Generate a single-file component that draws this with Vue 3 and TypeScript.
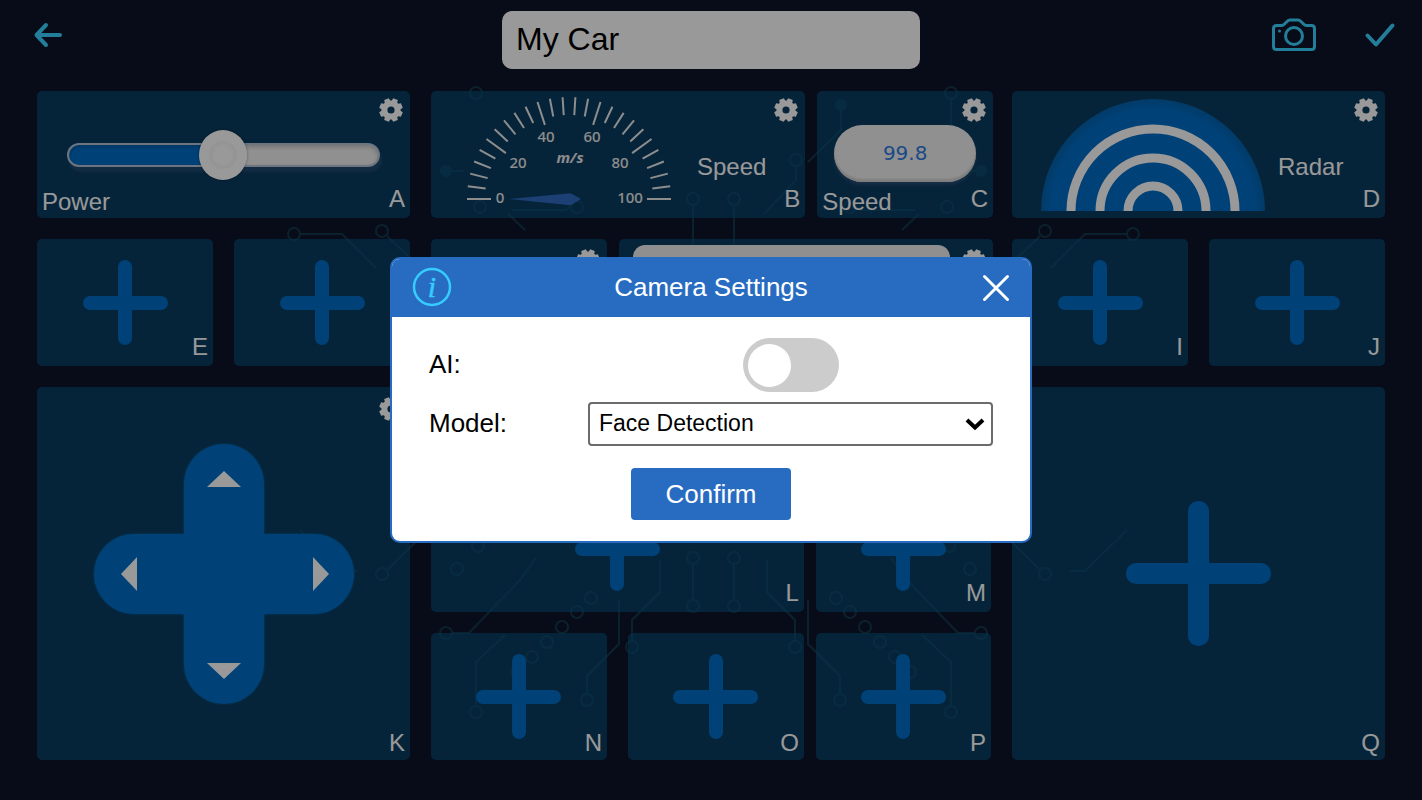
<script setup lang="ts">
import { computed, defineComponent, h, ref } from 'vue'

const carName = ref('My Car')
const power = ref(50)
const aiEnabled = ref(false)
const model = ref('Face Detection')
const models = ['Face Detection', 'Object Detection', 'Line Tracking']

const trackFill = computed(() => ({ '--fill': power.value + '%' }))

function polar(cx: number, cy: number, r: number, deg: number): string {
  const a = (deg * Math.PI) / 180
  return (cx + r * Math.cos(a)).toFixed(2) + ' ' + (cy - r * Math.sin(a)).toFixed(2)
}

const ticks = Array.from({ length: 26 }, (_, i) => {
  const deg = 180 - i * 7.2
  return 'M' + polar(105, 105, 102, deg) + 'L' + polar(105, 105, i % 5 === 0 ? 78 : 84, deg)
}).join('')

const gearPath = (() => {
  const pts: string[] = []
  for (let i = 0; i < 8; i++) {
    const mid = 22.5 + i * 45
    pts.push(polar(12, 12, 9.6, mid - 18), polar(12, 12, 12, mid - 12), polar(12, 12, 12, mid + 12), polar(12, 12, 9.6, mid + 18))
  }
  return 'M' + pts.join('L') + 'ZM15.6 12a3.6 3.6 0 1 0-7.2 0a3.6 3.6 0 1 0 7.2 0Z'
})()

const GearButton = defineComponent({
  setup: () => () =>
    h('button', { class: 'gear', type: 'button', 'aria-label': 'Widget settings' }, [
      h('svg', { viewBox: '0 0 24 24', width: 24, height: 24 }, [
        h('path', { d: gearPath, fill: '#fff', 'fill-rule': 'evenodd' }),
      ]),
    ]),
})

const AddButton = defineComponent({
  props: { large: Boolean },
  setup: (props) => () =>
    h('button', { class: ['add', { large: props.large }], type: 'button', 'aria-label': 'Add widget' }),
})

const leftRings = [
  [476, 93], [480, 207], [577, 207], [294, 234], [382, 231], [693, 199], [382, 574],
  [446, 633], [476, 712], [632, 647], [587, 700], [693, 606], [591, 598], [577, 612], [562, 627],
  [547, 642], [532, 657], [517, 672], [457, 569], [478, 546], [693, 558],
]
</script>

<template>
  <div class="page">
    <svg class="circuit" viewBox="0 0 1422 800" preserveAspectRatio="xMidYMid slice" aria-hidden="true">
      <defs>
        <g id="half">
          <circle v-for="(r, i) in leftRings" :key="i" :cx="r[0]" :cy="r[1]" r="6" />
          <circle cx="446" cy="171" r="5" class="dot" />
          <path d="M452 171H464M512 210H566L571 206M300 234H342L376 268M387 236L410 258M693 205V245M388 569L440 518M452 633H469L520 580L536 558M476 706V662L505 635M632 641V620L660 592V560M587 694V676L619 644V600M693 564V600M508 214L525 230M357 571H342L300 530" />
        </g>
      </defs>
      <use href="#half" />
      <use href="#half" transform="translate(1427 0) scale(-1 1)" />
      <circle cx="841" cy="105" r="5" class="dot" />
      <circle cx="796" cy="160" r="6" />
      <path d="M841 110V130L808 162M796 166V180L764 214M951 99V125" />
    </svg>

    <header class="topbar">
      <button class="icon-btn" type="button" aria-label="Back">
        <svg width="30" height="28" viewBox="0 0 30 28"><path d="M13 4L3.500 14L13 24M4 14H27" /></svg>
      </button>
      <input v-model="carName" class="car-name" type="text" aria-label="Car name" />
      <div class="actions">
        <button class="icon-btn" type="button" aria-label="Camera">
          <svg class="thin" width="46" height="36" viewBox="0 0 46 36">
            <path d="M5.500 8.500H10.500Q12 8.500 13.500 7L16 4.500Q17.500 3 19 3H27Q28.500 3 30 4.500L32.500 7Q34 8.500 35.500 8.500H40.500Q43.500 8.500 43.500 11.500V29.500Q43.500 32.500 40.500 32.500H5.500Q2.500 32.500 2.500 29.500V11.500Q2.500 8.500 5.500 8.500Z" />
            <circle cx="23" cy="19" r="8.500" />
            <circle class="led" cx="8.500" cy="14" r="1.500" />
          </svg>
        </button>
        <button class="icon-btn" type="button" aria-label="Done">
          <svg width="32" height="28" viewBox="0 0 32 28"><path d="M3.500 14.500L12 23.500L28.500 4.500" /></svg>
        </button>
      </div>
    </header>

    <main class="board">
      <section class="column side">
        <article class="tile">
          <input v-model.number="power" class="power" type="range" min="0" max="100" aria-label="Power" :style="trackFill" />
          <GearButton />
          <span class="name">Power</span>
          <span class="slot">A</span>
        </article>
        <div class="row halves">
          <article class="tile"><AddButton /><span class="slot">E</span></article>
          <article class="tile"><AddButton /><span class="slot">F</span></article>
        </div>
        <article class="tile square">
          <div class="dpad">
            <button class="arm up" type="button" aria-label="Forward"><svg width="34" height="16" viewBox="0 0 34 16"><path d="M0 16L17 0L34 16Z" /></svg></button>
            <button class="arm left" type="button" aria-label="Left"><svg width="16" height="34" viewBox="0 0 16 34"><path d="M16 0L0 17L16 34Z" /></svg></button>
            <span class="hub"></span>
            <button class="arm right" type="button" aria-label="Right"><svg width="16" height="34" viewBox="0 0 16 34"><path d="M0 0L16 17L0 34Z" /></svg></button>
            <button class="arm down" type="button" aria-label="Backward"><svg width="34" height="16" viewBox="0 0 34 16"><path d="M0 0L17 16L34 0Z" /></svg></button>
          </div>
          <GearButton class="low" />
          <span class="slot">K</span>
        </article>
      </section>

      <section class="column middle">
        <div class="row wide-first">
          <article class="tile">
            <div class="readout gauge-row">
              <svg class="gauge" width="210" height="116" viewBox="0 0 210 116" role="img" aria-label="Speed gauge">
                <path :d="ticks" class="ticks" />
                <path d="M45 105L104 99.500Q106 99 108 100L117 105L108 110.500Q106 111.500 104 111Z" fill="#3069c1" />
                <g class="scale">
                  <text x="36" y="109">0</text>
                  <text x="54" y="74">20</text>
                  <text x="82" y="48">40</text>
                  <text x="128" y="48">60</text>
                  <text x="156" y="74">80</text>
                  <text x="166" y="109">100</text>
                  <text x="106" y="69" class="unit">m/s</text>
                </g>
              </svg>
              <span class="caption">Speed</span>
            </div>
            <GearButton />
            <span class="slot">B</span>
          </article>
          <article class="tile">
            <output class="value">99.8</output>
            <GearButton />
            <span class="name">Speed</span>
            <span class="slot">C</span>
          </article>
        </div>
        <div class="row wide-last">
          <article class="tile"><GearButton class="low" /><span class="slot">G</span></article>
          <article class="tile">
            <div class="screen"></div>
            <GearButton class="low" />
            <span class="slot">H</span>
          </article>
        </div>
        <div class="row wide-first lower inset">
          <article class="tile"><AddButton /><span class="slot">L</span></article>
          <article class="tile"><AddButton /><span class="slot">M</span></article>
        </div>
        <div class="row wide-first inset">
          <div class="row halves">
            <article class="tile"><AddButton /><span class="slot">N</span></article>
            <article class="tile"><AddButton /><span class="slot">O</span></article>
          </div>
          <article class="tile"><AddButton /><span class="slot">P</span></article>
        </div>
      </section>

      <section class="column side">
        <article class="tile">
          <div class="readout radar-row">
            <svg class="radar" width="224" height="112" viewBox="0 0 224 112" role="img" aria-label="Radar">
              <defs>
                <radialGradient id="radarFill" gradientUnits="userSpaceOnUse" cx="112" cy="112" r="112">
                  <stop offset=".9" stop-color="#006ec8" />
                  <stop offset="1" stop-color="#0562ac" />
                </radialGradient>
              </defs>
              <circle cx="112" cy="112" r="112" fill="url(#radarFill)" />
              <circle cx="112" cy="112" r="82" />
              <circle cx="112" cy="112" r="53" />
              <circle cx="112" cy="112" r="25" />
            </svg>
            <span class="caption">Radar</span>
          </div>
          <GearButton />
          <span class="slot">D</span>
        </article>
        <div class="row halves">
          <article class="tile"><AddButton /><span class="slot">I</span></article>
          <article class="tile"><AddButton /><span class="slot">J</span></article>
        </div>
        <article class="tile square"><AddButton large /><span class="slot">Q</span></article>
      </section>
    </main>

    <div class="overlay">
      <form class="dialog" role="dialog" aria-labelledby="dialog-title" @submit.prevent>
        <div class="dialog-head">
          <svg class="info" width="40" height="40" viewBox="0 0 40 40" aria-hidden="true">
            <circle cx="20" cy="20" r="18" />
            <text x="20" y="30">i</text>
          </svg>
          <h1 id="dialog-title">Camera Settings</h1>
          <button class="close" type="button" aria-label="Close">
            <svg width="28" height="28" viewBox="0 0 28 28"><path d="M2.500 2.500L25.500 25.500M25.500 2.500L2.500 25.500" /></svg>
          </button>
        </div>
        <div class="dialog-body">
          <div class="field">
            <label for="ai">AI:</label>
            <input id="ai" v-model="aiEnabled" class="toggle" type="checkbox" role="switch" />
          </div>
          <div class="field">
            <label for="model">Model:</label>
            <div class="select-wrap">
              <select id="model" v-model="model">
                <option v-for="m in models" :key="m">{{ m }}</option>
              </select>
              <svg width="20" height="14" viewBox="0 0 20 14" aria-hidden="true"><path d="M2 3L10 10.500L18 3" /></svg>
            </div>
          </div>
          <button class="confirm" type="submit">Confirm</button>
        </div>
      </form>
    </div>
  </div>
</template>

<style>
body {
  margin: 0;
  background: #080c18;
}
</style>

<style scoped>
.page {
  position: relative;
  box-sizing: border-box;
  min-height: 100vh;
  padding: 0 37px 39px;
  background: #0d1428;
  color: #fff;
  font-family: "Liberation Sans", Arial, sans-serif;
  font-size: 24px;
  line-height: 24px;
}
.page :deep(button) {
  padding: 0;
  border: 0;
  background: none;
  font: inherit;
  color: inherit;
  cursor: pointer;
}
svg {
  display: block;
}
.circuit {
  position: absolute;
  inset: 0;
  width: 100%;
  height: 100%;
  fill: none;
  stroke: #1c5a72;
  stroke-width: 2;
  opacity: .5;
}
.circuit .dot {
  fill: #1c5a72;
}

.topbar {
  position: relative;
  display: grid;
  grid-template-columns: 1fr 418px 1fr;
  align-items: center;
  height: 69px;
  margin-bottom: 22px;
}
.icon-btn {
  justify-self: start;
  margin-left: -4px;
}
.icon-btn path,
.icon-btn circle {
  fill: none;
  stroke: #3ad2ff;
  stroke-width: 4;
  stroke-linecap: round;
  stroke-linejoin: round;
}
.icon-btn .thin path,
.icon-btn .thin circle {
  stroke-width: 3;
}
.icon-btn .thin .led {
  fill: #3ad2ff;
  stroke: none;
}
.car-name {
  box-sizing: border-box;
  align-self: end;
  width: 100%;
  height: 58px;
  padding: 0 14px 2px;
  border: 0;
  border-radius: 10px;
  background: #fff;
  color: #000;
  font: 32px/40px "Liberation Sans", Arial, sans-serif;
}
.actions {
  display: flex;
  justify-self: end;
  align-items: center;
  gap: 51px;
  margin-right: -11px;
}

.board {
  position: relative;
  display: flex;
}
.column {
  display: flex;
  flex-direction: column;
  gap: 21px;
  min-width: 0;
}
.side {
  flex: 373 1 0;
}
.middle {
  flex: 562 1 0;
  margin: 0 19px 0 21px;
}
.row {
  display: grid;
  gap: 12px;
}
.halves {
  grid-template-columns: 1fr 1fr;
  gap: 21px;
}
.wide-first {
  grid-template-columns: 375fr 176fr;
}
.wide-last {
  grid-template-columns: 176fr 374fr;
}
.lower {
  margin-top: auto;
}
.inset {
  margin-right: 2px;
}
.tile {
  box-sizing: border-box;
  display: grid;
  min-width: 0;
  height: 127px;
  padding: 7px;
  border-radius: 5px;
  background: rgba(8, 87, 133, .6);
}
.tile.square {
  height: auto;
  aspect-ratio: 1;
}
.tile > * {
  grid-area: 1 / 1;
}
.slot {
  align-self: end;
  justify-self: end;
  margin-right: -2px;
}
.square .slot,
.inset:last-child .slot {
  margin-bottom: -2px;
}
.name {
  align-self: end;
  justify-self: start;
  margin: 0 0 -3px -2px;
}
:deep(.gear) {
  place-self: start end;
}
:deep(.gear.low) {
  margin-top: 3px;
}
:deep(.gear svg) {
  display: block;
}
:deep(.add) {
  --size: 85px;
  --bar: 14px;
  display: grid;
  place-self: center;
  width: var(--size);
  height: var(--size);
}
:deep(.add.large) {
  --size: 145px;
  --bar: 21px;
}
:deep(.add::before),
:deep(.add::after) {
  content: "";
  grid-area: 1 / 1;
  place-self: center;
  width: var(--size);
  height: var(--bar);
  border-radius: 10px;
  background: #006ec8;
}
:deep(.add::after) {
  width: var(--bar);
  height: var(--size);
}

.power {
  appearance: none;
  box-sizing: border-box;
  place-self: center;
  width: 87%;
  height: 24px;
  margin: 0;
  border: 2px solid #b4c4d6;
  border-radius: 12px;
  background: linear-gradient(90deg, #006ec8 var(--fill), #f0f0f0 var(--fill));
  box-shadow: inset 0 2px 4px rgba(0, 0, 0, .2), 2px 5px 2px rgba(90, 110, 150, .25);
}
.power::-webkit-slider-thumb {
  appearance: none;
  width: 48px;
  height: 50px;
  border-radius: 50%;
  background: radial-gradient(circle, #fff 0 24%, #f6f6f6 38%, #fff 42%, #fff 100%);
  box-shadow: 0 0 3px rgba(0, 0, 0, .4);
}
.readout {
  display: flex;
  align-items: center;
}
.caption {
  margin-top: 24px;
}
.gauge-row {
  gap: 23px;
  padding-left: 26px;
}
.gauge {
  align-self: start;
  margin-top: -4px;
}
.ticks {
  fill: none;
  stroke: #ececec;
  stroke-width: 2;
}
.scale {
  fill: #ececec;
  font: 500 15px "Noto Sans", "Open Sans", sans-serif;
  text-anchor: middle;
}
.scale .unit {
  font-style: italic;
  font-weight: 700;
}
.value {
  box-sizing: border-box;
  place-self: center;
  width: 142px;
  height: 57px;
  margin-bottom: 2px;
  border-radius: 29px;
  background: #f0f0f0;
  box-shadow: inset 0 -3px 2px #d2d2d2, 0 3px 3px rgba(60, 90, 130, .6);
  color: #2f7ae0;
  font: 20px/57px "DejaVu Sans", Verdana, sans-serif;
  text-align: center;
}
.screen {
  justify-self: start;
  width: 88%;
  margin: -1px 7px 20px;
  border-radius: 12px;
  background: #eee;
}
.radar-row {
  gap: 13px;
  padding-left: 22px;
}
.radar circle + circle {
  fill: none;
  stroke: #fff;
  stroke-width: 9;
}

.dpad {
  display: grid;
  grid-template: repeat(3, auto) / repeat(3, auto);
  place-self: center;
  filter: drop-shadow(0 0 1px #006eae);
}
.arm,
.hub {
  display: flex;
  box-sizing: border-box;
  align-items: center;
  justify-content: center;
  width: 90px;
  height: 80px;
}
.page .arm,
.hub {
  background: #006ec8;
}
.arm path {
  fill: #fff;
}
.up,
.down,
.hub {
  grid-column: 2;
  width: 80px;
}
.up,
.down {
  height: 90px;
}
.hub,
.left,
.right {
  grid-row: 2;
}
.page .up {
  padding-bottom: 20px;
  border-radius: 40px 40px 0 0;
}
.page .down {
  grid-row: 3;
  padding-top: 24px;
  border-radius: 0 0 40px 40px;
}
.page .left {
  grid-column: 1;
  padding-right: 20px;
  border-radius: 40px 0 0 40px;
}
.page .right {
  grid-column: 3;
  padding-left: 24px;
  border-radius: 0 40px 40px 0;
}

.overlay {
  position: fixed;
  inset: 0;
  display: flex;
  align-items: center;
  justify-content: center;
  background: rgba(0, 0, 0, .4);
}
.dialog {
  box-sizing: border-box;
  width: 642px;
  max-width: 94vw;
  overflow: hidden;
  border: 2px solid #286cc2;
  border-radius: 10px;
  background: #fff;
  color: #000;
  font-size: 26px;
  line-height: 30px;
}
.dialog-head {
  box-sizing: border-box;
  display: grid;
  grid-template-columns: 40px 1fr 40px;
  align-items: center;
  height: 58px;
  padding: 0 20px 3px;
  background: #286cc2;
  color: #fff;
}
.info circle {
  fill: none;
  stroke: #36ccff;
  stroke-width: 2.5;
}
.info text {
  fill: #36ccff;
  stroke: #36ccff;
  stroke-width: .5;
  font: italic 30px "Liberation Serif", "Times New Roman", serif;
  text-anchor: middle;
}
h1 {
  margin: 0;
  font-size: inherit;
  font-weight: 400;
  text-align: center;
}
.close {
  justify-self: end;
  margin-top: 3px;
}
.close path {
  fill: none;
  stroke: #fff;
  stroke-width: 3;
  stroke-linecap: round;
}
.dialog-body {
  display: flex;
  flex-direction: column;
  gap: 10px;
  padding: 21px 37px;
}
.field {
  display: grid;
  grid-template-columns: 159px 1fr;
  align-items: center;
}
.field label {
  padding-bottom: 2px;
}
.toggle {
  appearance: none;
  display: flex;
  align-items: center;
  box-sizing: border-box;
  justify-self: center;
  width: 96px;
  height: 54px;
  margin: 0;
  padding: 0 5px;
  border-radius: 27px;
  background: #ccc;
  cursor: pointer;
}
.toggle::before {
  content: "";
  width: 43px;
  height: 43px;
  border-radius: 50%;
  background: #fff;
}
.toggle:checked {
  justify-content: flex-end;
  background: #286cc2;
}
.select-wrap {
  display: grid;
  align-items: center;
}
.select-wrap > * {
  grid-area: 1 / 1;
}
.select-wrap svg {
  justify-self: end;
  margin-right: 8px;
  pointer-events: none;
}
.select-wrap path {
  fill: none;
  stroke: #000;
  stroke-width: 4;
}
select {
  appearance: none;
  box-sizing: border-box;
  width: 100%;
  height: 44px;
  padding: 0 36px 2px 9px;
  border: 2px solid #6b6b6b;
  border-radius: 4px;
  background: #fff;
  color: #000;
  font: 23px/28px "Liberation Sans", Arial, sans-serif;
}
.page .confirm {
  align-self: center;
  width: 160px;
  height: 52px;
  margin-top: 12px;
  border-radius: 4px;
  background: #286cc2;
  color: #fff;
}
</style>
